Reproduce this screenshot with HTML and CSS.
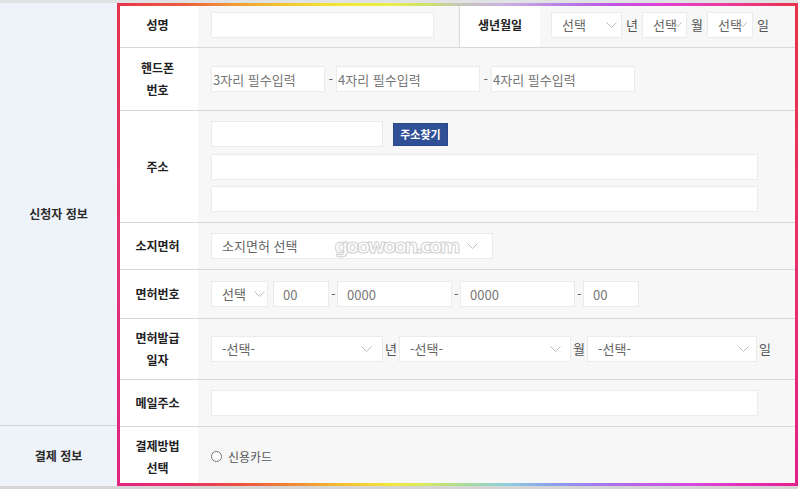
FILE: index.html
```html
<!DOCTYPE html>
<html lang="ko">
<head>
<meta charset="utf-8">
<title>신청서</title>
<link rel="stylesheet" href="styles.css">
</head>
<body>
<div class="sheet">
  <div class="side">
    <div class="group g1">신청자 정보</div>
    <div class="group g2">결제 정보</div>
  </div>
  <div class="main">
    <div class="row h1">
      <div class="lbl">성명</div>
      <div class="cell split">
        <div class="part1"><input class="inp w223" type="text"></div>
        <div class="sublbl">생년월일</div>
        <div class="part2">
          <div class="sel w71 pr4"><span>선택</span><svg class="chev" width="11" height="7" viewBox="0 0 11 7"><polyline points="0.5,0.5 5.5,5.5 10.5,0.5"/></svg></div>
          <span class="unit">년</span>
          <div class="sel w45 pr1"><span>선택</span><svg class="chev sm" width="8" height="6" viewBox="0 0 8 6"><polyline points="0.5,0.5 4,4.5 7.5,0.5"/></svg></div>
          <span class="unit">월</span>
          <div class="sel w46 pr1"><span>선택</span><svg class="chev sm" width="8" height="6" viewBox="0 0 8 6"><polyline points="0.5,0.5 4,4.5 7.5,0.5"/></svg></div>
          <span class="unit">일</span>
        </div>
      </div>
    </div>
    <div class="row h2">
      <div class="lbl">핸드폰<br>번호</div>
      <div class="cell line g35">
        <input class="inp tight w114" type="text" placeholder="3자리 필수입력">
        <span class="dash">-</span>
        <input class="inp tight w144" type="text" placeholder="4자리 필수입력">
        <span class="dash">-</span>
        <input class="inp tight w144" type="text" placeholder="4자리 필수입력">
      </div>
    </div>
    <div class="row h3">
      <div class="lbl">주소</div>
      <div class="cell stack">
        <div class="line">
          <input class="inp w172" type="text">
          <button class="btn" type="button">주소찾기</button>
        </div>
        <input class="inp w547" type="text">
        <input class="inp w547" type="text">
      </div>
    </div>
    <div class="row h4">
      <div class="lbl">소지면허</div>
      <div class="cell line">
        <div class="sel w282 pr14"><span>소지면허 선택</span><span class="wm">goowoon.com</span><svg class="chev" width="11" height="7" viewBox="0 0 11 7"><polyline points="0.5,0.5 5.5,5.5 10.5,0.5"/></svg></div>
      </div>
    </div>
    <div class="row h5">
      <div class="lbl">면허번호</div>
      <div class="cell line g2">
        <div class="sel w57 pr2"><span>선택</span><svg class="chev" width="11" height="7" viewBox="0 0 11 7"><polyline points="0.5,0.5 5.5,5.5 10.5,0.5"/></svg></div>
        <input class="inp w56 ml3" type="text" placeholder="00">
        <span class="dash">-</span>
        <input class="inp w115" type="text" placeholder="0000">
        <span class="dash">-</span>
        <input class="inp w115" type="text" placeholder="0000">
        <span class="dash">-</span>
        <input class="inp w56" type="text" placeholder="00">
      </div>
    </div>
    <div class="row h6">
      <div class="lbl">면허발급<br>일자</div>
      <div class="cell line g2">
        <div class="sel w172 pr10"><span>-선택-</span><svg class="chev" width="11" height="7" viewBox="0 0 11 7"><polyline points="0.5,0.5 5.5,5.5 10.5,0.5"/></svg></div>
        <span class="unit">년</span>
        <div class="sel w172 pr9"><span>-선택-</span><svg class="chev" width="11" height="7" viewBox="0 0 11 7"><polyline points="0.5,0.5 5.5,5.5 10.5,0.5"/></svg></div>
        <span class="unit">월</span>
        <div class="sel w170 pr7"><span>-선택-</span><svg class="chev" width="11" height="7" viewBox="0 0 11 7"><polyline points="0.5,0.5 5.5,5.5 10.5,0.5"/></svg></div>
        <span class="unit">일</span>
      </div>
    </div>
    <div class="row h7">
      <div class="lbl">메일주소</div>
      <div class="cell line">
        <input class="inp w547" type="text">
      </div>
    </div>
    <div class="row h8 last">
      <div class="lbl">결제방법<br>선택</div>
      <div class="cell line">
        <label class="radio"><input type="radio" name="pay"><span>신용카드</span></label>
      </div>
    </div>
  </div>
</div>
</body>
</html>
```

FILE: styles.css
```css
* { box-sizing: border-box; }
html, body { margin: 0; padding: 0; background: #fff; }
body {
  font-family: "Noto Sans CJK KR", "Noto Sans", sans-serif;
  color: #333;
}
.sheet {
  display: flex;
  width: 798px;
  border-top: 3px solid #e1e2e4;
  border-bottom: 3px solid #d6d6d6;
}
.side {
  width: 117px;
  flex: 0 0 117px;
  display: flex;
  flex-direction: column;
  background: #eef2f9;
}
.group {
  display: flex;
  align-items: center;
  justify-content: center;
  font-size: 12px;
  font-weight: 700;
  color: #2a2a2a;
  line-height: 16px;
}
.g1 { height: 423px; border-bottom: 1px solid #cfd2d7; }
.g2 { flex: 1; }

.main {
  position: relative;
  flex: 1;
  display: flex;
  flex-direction: column;
}
.main::after {
  content: "";
  position: absolute;
  inset: 0;
  pointer-events: none;
  background:
    linear-gradient(90deg, #e8334a 0%, #ec6040 10%, #f09a34 17%, #f3c82f 25%, #f2e936 33%, #e9ee48 40%, #cde070 46%, #c4c8b4 50%, #cbb0e0 57%, #b67ce6 66%, #c052e2 73%, #e040d4 80%, #ec3aa0 89%, #ea3470 95%, #e8334a 100%) top / 100% 3px no-repeat,
    linear-gradient(90deg, #e1267f 0%, #e7306a 10%, #ec5040 18%, #f08a36 26%, #f4be30 33%, #f2e63c 40%, #d8ea60 45%, #a8dc98 51%, #90d0dc 57%, #8aa0ee 64%, #a07cf0 70%, #bc60e8 77%, #d848dc 85%, #e42cb4 93%, #e51e8e 100%) bottom / 100% 3px no-repeat,
    linear-gradient(180deg, #e6334c, #e3307a 60%, #e0237f) left / 3px 100% no-repeat,
    linear-gradient(180deg, #e8334a, #e6306c 60%, #e41e8c) right / 3px 100% no-repeat;
}

.row {
  display: grid;
  grid-template-columns: 81px 1fr;
  border-bottom: 1px solid #d8d8d8;
}
.row.last { border-bottom: 0; }
.h1 { height: 45px; }
.h2 { height: 63px; }
.h3 { height: 112px; }
.h4 { height: 47px; }
.h5 { height: 49px; }
.h6 { height: 61px; }
.h7 { height: 47px; }
.h8 { height: 59px; }

.lbl, .sublbl {
  background: #fff;
  display: flex;
  align-items: center;
  justify-content: center;
  text-align: center;
  font-size: 12px;
  font-weight: 700;
  color: #222;
  line-height: 22px;
}
.cell {
  background: #f7f7f7;
  padding-left: 13px;
}
.line {
  display: flex;
  align-items: center;
}
.g35 { gap: 3.5px; }
.g2 { gap: 2px; }
.stack {
  display: flex;
  flex-direction: column;
  justify-content: center;
  gap: 6.5px;
}
.split {
  display: flex;
  padding-left: 0;
}
.part1 {
  width: 261px;
  flex: 0 0 261px;
  padding-left: 13px;
  display: flex;
  align-items: center;
}
.sublbl {
  width: 81px;
  flex: 0 0 81px;
  border-left: 1px solid #dadada;
}
.part2 {
  flex: 1;
  padding-left: 11px;
  display: flex;
  align-items: center;
  gap: 4px;
}

.inp {
  height: 26px;
  border: 1px solid #ebebeb;
  background: #fff;
  font-family: inherit;
  font-size: 13px;
  color: #666;
  padding: 0 9px;
  margin: 0;
  outline: none;
  border-radius: 0;
}
.inp::placeholder { color: #777; opacity: 1; }
.inp.tight { padding: 0 0 0 1px; }
.w223 { width: 223px; }
.w114 { width: 114px; }
.w144 { width: 144px; }
.w172 { width: 172px; }
.w547 { width: 547px; }
.w56 { width: 56px; }
.w115 { width: 115px; }
.w57 { width: 57px; }
.w71 { width: 71px; }
.w45 { width: 45px; }
.w46 { width: 46px; }
.w170 { width: 170px; }
.w282 { width: 282px; }
.ml3 { margin-left: 3px; }

.dash {
  width: 4px;
  text-align: center;
  font-size: 13px;
  color: #666;
  line-height: 16px;
}
.unit {
  font-size: 13px;
  color: #555;
  line-height: 16px;
}

.sel {
  height: 26px;
  display: flex;
  align-items: center;
  background: #fff;
  border: 1px solid #ebebeb;
  padding-left: 10px;
  font-size: 13px;
  color: #666;
  line-height: 16px;
  white-space: nowrap;
  overflow: hidden;
}
.sel > span:first-child { flex-shrink: 0; }
.chev {
  flex-shrink: 0;
  margin-left: auto;
  fill: none;
  stroke: #bdbdbd;
  stroke-width: 1;
}
.chev.sm { margin-left: -3px; }
.pr1 { padding-right: 1px; }
.pr2 { padding-right: 2px; }
.pr4 { padding-right: 4px; }
.pr7 { padding-right: 7px; }
.pr9 { padding-right: 9px; }
.pr10 { padding-right: 10px; }
.pr14 { padding-right: 14px; }

.wm {
  margin-left: 37px;
  font-family: "DejaVu Sans", sans-serif;
  font-weight: 700;
  font-size: 20px;
  letter-spacing: -3px;
  color: #fdfdfd;
  -webkit-text-stroke: 1px #d2d2d2;
  line-height: 20px;
}

.btn {
  margin-left: 10px;
  width: 55px;
  height: 23px;
  padding: 0;
  border: 1px solid #2a4788;
  background: #2f4f96;
  color: #fff;
  font-family: inherit;
  font-size: 11px;
  font-weight: 700;
  line-height: 14px;
  border-radius: 0;
}

.radio {
  display: flex;
  align-items: center;
  gap: 6px;
  font-size: 12px;
  color: #555;
  line-height: 16px;
}
.radio input {
  appearance: none;
  -webkit-appearance: none;
  width: 11px;
  height: 11px;
  margin: 0;
  border: 1px solid #777;
  border-radius: 50%;
  background: #fff;
}
```
